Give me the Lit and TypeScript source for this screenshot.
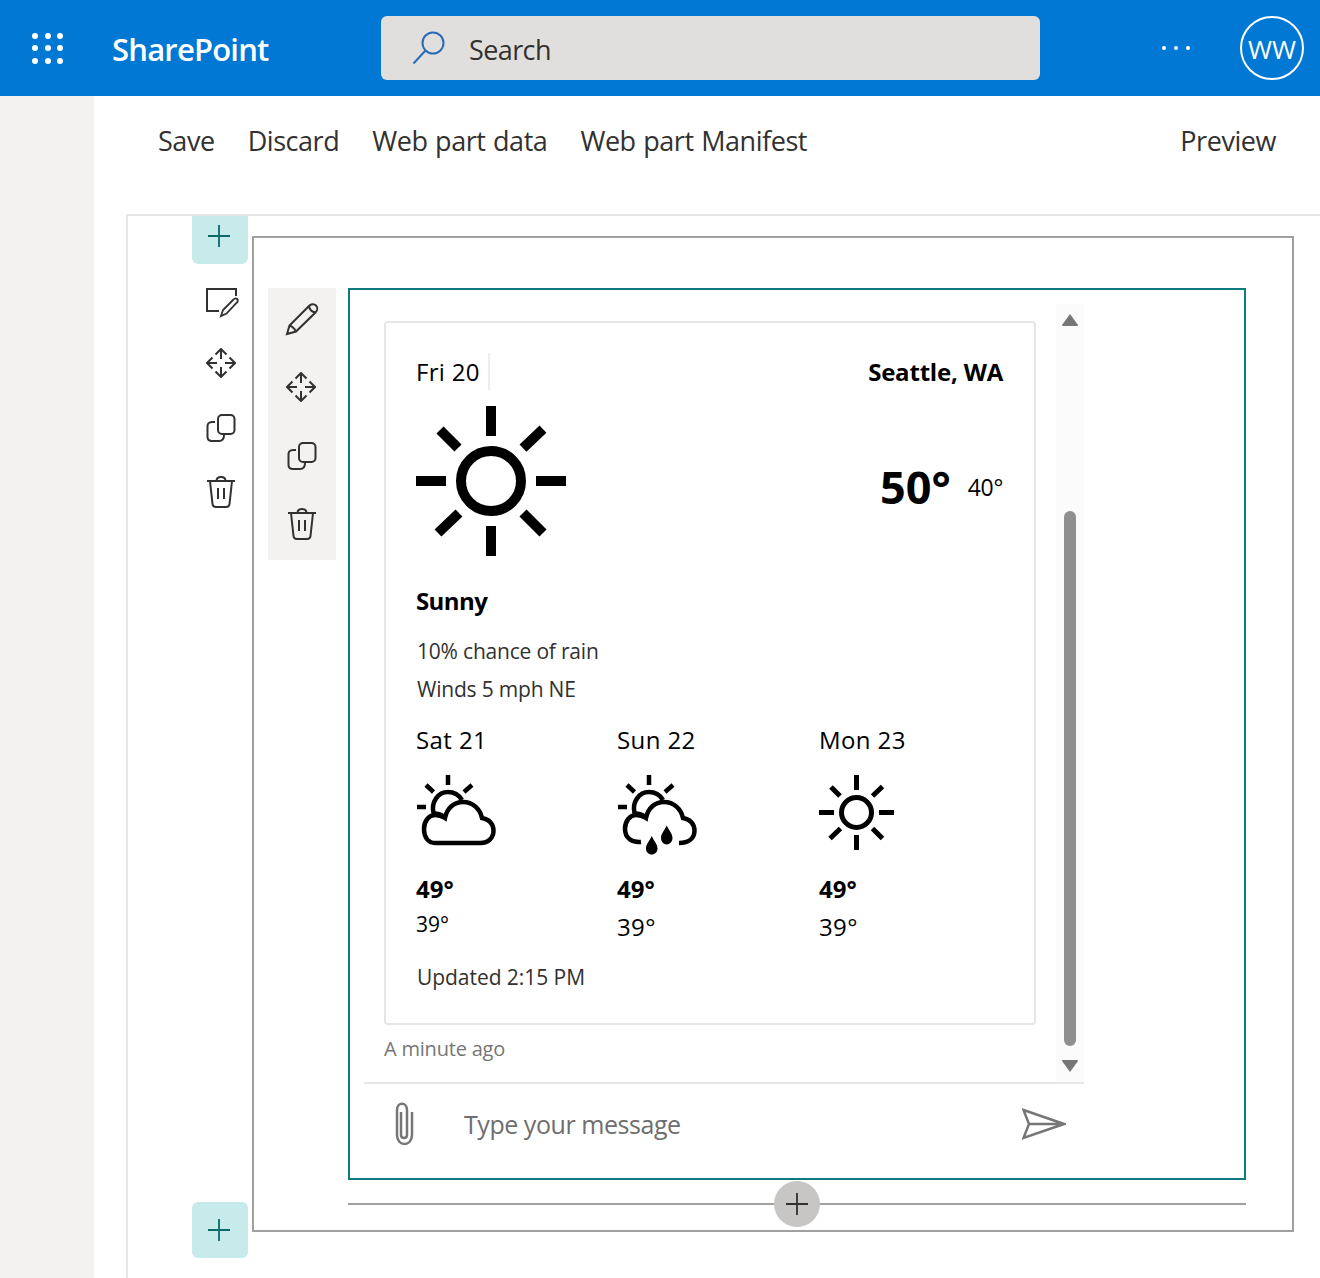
import { LitElement, html, svg, css } from "lit";
import { customElement } from "lit/decorators.js";

const sunIcon = (size: number) => html`
  <svg width=${size} height=${size} viewBox="0 0 150 150" fill="none" stroke="#000" stroke-width="10">
    <circle cx="75" cy="75" r="30" />
    <path d="M75 0V30M75 120V150M0 75H30M120 75H150M24 24L42 42M127 23L107 42M22 127L43 107M127 127L107 107" />
  </svg>
`;

const sunBehind = svg`
  <path d="M32 0V10M1 32H10M10 10L17.500 17M56 10L48 17" />
  <path d="M17.500 38C15 27 22 17 32 17C38 17 43 20 46 25" />
  <path d="M18 38.500C22 38.500 25 39.500 28 41.500" />
`;

const cloudSunIcon = html`
  <svg width="81" height="81" viewBox="0 0 81 81" fill="none" stroke="#000" stroke-width="4.500">
    ${sunBehind}
    <path d="M19 68C12 68 8 62 8 54C8 46 13 40 19 40C23 40 26 41 29 43C31 33 38 27 47 27C57 27 64 34 66 43C73 44 77.500 49 77.500 55.500C77.500 63 72 68 65 68Z" />
  </svg>
`;

const rainIcon = html`
  <svg width="81" height="81" viewBox="0 0 81 81" fill="none" stroke="#000" stroke-width="4.500">
    ${sunBehind}
    <path d="M24 67C14 68 8 62 8 54C8 46 13 40 19 40C23 40 26 41 29 43C31 33 38 27 47 27C57 27 64 34 66 43C73 44 77.500 49 77.500 55.500C77.500 63 72 68 62 68" />
    <path fill="#000" stroke="none" d="M34.700 61C37 66 40.500 69 40.500 73.500C40.500 77 38 79.500 34.700 79.500C31.500 79.500 29 77 29 73.500C29 69 32.500 66 34.700 61Z" />
    <path fill="#000" stroke="none" d="M49.700 50.500C52 55.500 55.500 58.500 55.500 63C55.500 66.500 53 69.500 49.700 69.500C46.500 69.500 44 66.500 44 63C44 58.500 47.500 55.500 49.700 50.500Z" />
  </svg>
`;

const moveIcon = html`
  <svg class="move" width="30" height="30" viewBox="0 0 30 30" fill="none" stroke="#323130" stroke-width="2">
    <path d="M15 1V11M15 19V29M1 15H11M19 15H29M9.500 6.500L15 1L20.500 6.500M9.500 23.500L15 29L20.500 23.500M6.500 9.500L1 15L6.500 20.500M23.500 9.500L29 15L23.500 20.500" />
  </svg>
`;

const copyIcon = html`
  <svg width="30" height="28" viewBox="0 0 30 28" fill="none" stroke="#323130" stroke-width="2">
    <rect x="12" y="1" width="16.500" height="19" rx="4" />
    <path d="M9 8H6C3 8 1.500 10 1.500 12V23C1.500 25.500 3 27 6 27H13C16 27 18 25 18 21" />
  </svg>
`;

const trashIcon = html`
  <svg width="30" height="32" viewBox="0 0 30 32" fill="none" stroke="#323130" stroke-width="2">
    <path d="M1 5H29M4 5L6.500 28C6.700 30 8 31 10 31H20C22 31 23.300 30 23.500 28L26 5M10.500 5C10.500 2.500 12.500 1 15 1C17.500 1 19.500 2.500 19.500 5M12 12V23M18 12V23" />
  </svg>
`;

const pencilIcon = html`
  <svg width="34" height="34" viewBox="0 0 34 34" fill="none" stroke="#323130" stroke-width="2">
    <path d="M2 32L4.500 23.500L24 4C26 2 29 1.500 31 3.500C33 5.500 32.500 8.500 30.500 10.500L11 29.500ZM4.500 23.500C7.500 24.500 9.500 26.500 11 29.500M24 4C24.500 7.500 27 10 30.500 10.500" />
  </svg>
`;

const noteIcon = html`
  <svg class="note" width="33" height="30" viewBox="0 0 33 30" fill="none" stroke="#323130" stroke-width="2">
    <path d="M13 23H1V1H30V8" />
    <path d="M15 28L17 22L27 12C28.500 10.500 30 10 31 11C32 12 32 13.500 30.500 15L20.500 25.500Z" stroke-width="1.800" />
  </svg>
`;

const plusIcon = html`
  <svg width="24" height="24" viewBox="0 0 24 24" fill="none" stroke="currentColor" stroke-width="1.800">
    <path d="M12 1V23M1 12H23" />
  </svg>
`;

const forecast = [
  { day: "Sat 21", icon: cloudSunIcon, high: "49°", low: "39°", lowClass: "low small" },
  { day: "Sun 22", icon: rainIcon, high: "49°", low: "39°", lowClass: "low" },
  { day: "Mon 23", icon: sunIcon(75), high: "49°", low: "39°", lowClass: "low" },
];

@customElement("app-root")
export class AppRoot extends LitElement {
  static styles = css`
    :host {
      display: block;
      height: 1278px;
      overflow: hidden;
      font-family: "Open Sans", "Noto Sans", sans-serif;
      color: #323130;
      background: #fff;
    }
    .top-bar {
      height: 96px;
      background: #0078d4;
      display: flex;
      align-items: center;
      color: #fff;
    }
    .waffle {
      margin-left: 32px;
      width: 32px;
      display: grid;
      grid-template-columns: repeat(3, 6px);
      gap: 6.5px;
    }
    .waffle i {
      width: 6px;
      height: 6px;
      border-radius: 50%;
      background: #fff;
    }
    .brand {
      margin-left: 48px;
      width: 269px;
      padding-top: 2px;
      font-size: 31px;
      font-weight: 600;
      letter-spacing: -0.8px;
    }
    .search {
      width: 659px;
      height: 64px;
      border-radius: 6px;
      background: #e1dfdd;
      display: flex;
      align-items: center;
      gap: 23px;
      padding-left: 31px;
      box-sizing: border-box;
      color: #323130;
      font-size: 27px;
      letter-spacing: -0.6px;
    }
    .search span {
      padding-top: 2px;
    }
    .dots {
      margin-left: 122px;
      display: flex;
      gap: 8px;
    }
    .dots i {
      width: 4px;
      height: 4px;
      border-radius: 50%;
      background: #fff;
    }
    .avatar {
      margin-left: 50px;
      width: 64px;
      height: 64px;
      box-sizing: border-box;
      border: 2px solid #fff;
      border-radius: 50%;
      padding-top: 2px;
      display: flex;
      align-items: center;
      justify-content: center;
      font-size: 26px;
    }
    .body {
      display: flex;
      height: 1182px;
    }
    .nav {
      width: 94px;
      background: #f3f2f1;
    }
    .page {
      flex: 1;
      min-width: 0;
    }
    .commands {
      height: 118px;
      box-sizing: border-box;
      padding: 28px 44px 0 64px;
      display: flex;
      gap: 33px;
      font-size: 27px;
      line-height: 34px;
      letter-spacing: -0.45px;
      word-spacing: 1px;
    }
    .commands .preview {
      margin-left: auto;
    }
    .canvas {
      margin-left: 32px;
      height: 1064px;
      box-sizing: border-box;
      border-top: 2px solid #e6e6e6;
      border-left: 2px solid #e6e6e6;
      display: flex;
    }
    .rail {
      width: 124px;
      flex: none;
      height: 1042px;
      display: flex;
      flex-direction: column;
      align-items: flex-start;
    }
    .add {
      margin-left: 64px;
      width: 56px;
      height: 56px;
      box-sizing: border-box;
      padding-right: 2px;
      background: #c7ebeb;
      color: #0b6a6a;
      border-radius: 6px;
      display: flex;
      align-items: center;
      justify-content: center;
    }
    .add.first {
      height: 48px;
      padding-bottom: 8px;
      border-radius: 0 0 6px 6px;
    }
    .add.last {
      margin-top: auto;
    }
    .rail-tools {
      margin: 24px 0 0 78px;
      display: flex;
      flex-direction: column;
      gap: 34px;
    }
    .note {
      margin-bottom: -2px;
    }
    .move {
      margin: -2px 0 2px;
    }
    .section {
      margin-top: 20px;
      width: 1042px;
      height: 996px;
      box-sizing: border-box;
      border: 2px solid #a0a0a0;
      padding: 50px 0 0 14px;
      display: flex;
      align-items: flex-start;
      gap: 12px;
      position: relative;
    }
    .part-tools {
      width: 68px;
      height: 272px;
      box-sizing: border-box;
      padding-top: 14px;
      background: #f3f2f1;
      display: flex;
      flex-direction: column;
      align-items: center;
      gap: 38px;
    }
    .part-tools .move {
      margin-left: -2px;
    }
    .webpart {
      width: 898px;
      height: 892px;
      box-sizing: border-box;
      border: 2px solid #0f7b7f;
      padding-left: 14px;
    }
    .chat {
      width: 720px;
      height: 888px;
      display: flex;
      flex-direction: column;
    }
    .thread {
      margin-top: 14px;
      height: 778px;
      display: flex;
      border-bottom: 2px solid #e6e6e6;
    }
    .messages {
      width: 692px;
      box-sizing: border-box;
      padding: 17px 20px 0;
    }
    .card {
      height: 704px;
      box-sizing: border-box;
      border: 2px solid #e6e6e6;
      border-radius: 4px;
      padding: 30px 31px 0 30px;
      color: #000;
    }
    .card-head {
      display: flex;
      justify-content: space-between;
      height: 37px;
      font-size: 24px;
      line-height: 37px;
    }
    .today {
      padding-right: 8px;
      border-right: 2px solid #eeeeee;
      letter-spacing: 0.3px;
    }
    .place {
      font-weight: 700;
      letter-spacing: -0.2px;
    }
    .hero {
      margin-top: 16px;
      display: flex;
      justify-content: space-between;
      align-items: center;
    }
    .temps {
      display: flex;
      align-items: center;
      gap: 17px;
      margin-top: 12px;
    }
    .high-big {
      font-size: 45px;
      font-weight: 700;
      line-height: 60px;
    }
    .low-big {
      font-size: 23px;
      line-height: 60px;
      letter-spacing: -0.3px;
    }
    .cond {
      margin-top: 28px;
      font-size: 24px;
      line-height: 34px;
      font-weight: 700;
      letter-spacing: -0.6px;
    }
    .details {
      margin-top: 14px;
      padding-left: 1px;
      font-size: 21px;
      line-height: 38px;
      letter-spacing: -0.2px;
      color: #323130;
    }
    .days {
      margin-top: 15px;
      display: grid;
      grid-template-columns: 201px 202px 1fr;
      font-size: 24px;
      letter-spacing: 0.4px;
    }
    .day-name {
      line-height: 34px;
    }
    .day-icon {
      margin-top: 18px;
      height: 81px;
    }
    .high {
      margin-top: 16px;
      line-height: 34px;
      font-weight: 700;
      letter-spacing: 0;
    }
    .low {
      margin-top: 2px;
      line-height: 38px;
    }
    .low.small {
      margin-top: 0;
      font-size: 21px;
      line-height: 36px;
      letter-spacing: 0;
    }
    .updated {
      margin-top: 14px;
      padding-left: 1px;
      font-size: 21px;
      line-height: 34px;
      letter-spacing: -0.05px;
      color: #323130;
    }
    .stamp {
      margin-top: 10px;
      font-size: 20px;
      line-height: 28px;
      color: #767676;
      letter-spacing: -0.2px;
    }
    .scrollbar {
      width: 28px;
      background: #fbfbfb;
      display: flex;
      flex-direction: column;
      align-items: center;
    }
    .thumb {
      margin-top: 185px;
      width: 12px;
      height: 535px;
      border-radius: 6px;
      background: #8f8f8f;
    }
    .arrow-up {
      margin-top: 10px;
    }
    .arrow-down {
      margin-top: 14px;
    }
    .composer {
      flex: 1;
      display: flex;
      align-items: center;
      padding: 0 18px 14px 30px;
      color: #6e6e6e;
      font-size: 25px;
      letter-spacing: -0.45px;
    }
    .composer span {
      margin-left: 50px;
      flex: 1;
    }
    .divider {
      position: absolute;
      left: 94px;
      top: 965px;
      width: 898px;
      height: 2px;
      background: #a0a0a0;
    }
    .insert {
      position: absolute;
      left: 426px;
      top: -22px;
      width: 46px;
      height: 46px;
      border-radius: 50%;
      background: #c8c6c4;
      display: flex;
      align-items: center;
      justify-content: center;
      color: #323130;
    }
  `;

  render() {
    return html`
      <div class="top-bar">
        <div class="waffle">${Array.from({ length: 9 }, () => html`<i></i>`)}</div>
        <div class="brand">SharePoint</div>
        <div class="search">
          <svg width="34" height="34" viewBox="0 0 34 34" fill="none" stroke="#2b6cb5" stroke-width="2">
            <circle cx="21" cy="12" r="10.500" />
            <path d="M13.500 19.500L1.500 32.500" />
          </svg>
          <span>Search</span>
        </div>
        <div class="dots"><i></i><i></i><i></i></div>
        <div class="avatar">WW</div>
      </div>
      <div class="body">
        <div class="nav"></div>
        <div class="page">
          <div class="commands">
            <span>Save</span>
            <span>Discard</span>
            <span>Web part data</span>
            <span>Web part Manifest</span>
            <span class="preview">Preview</span>
          </div>
          <div class="canvas">
            <div class="rail">
              <div class="add first">${plusIcon}</div>
              <div class="rail-tools">${noteIcon}${moveIcon}${copyIcon}${trashIcon}</div>
              <div class="add last">${plusIcon}</div>
            </div>
            <div class="section">
              <div class="part-tools">${pencilIcon}${moveIcon}${copyIcon}${trashIcon}</div>
              <div class="webpart">
                <div class="chat">
                  <div class="thread">
                    <div class="messages">
                      <div class="card">
                        <div class="card-head">
                          <span class="today">Fri 20</span>
                          <span class="place">Seattle, WA</span>
                        </div>
                        <div class="hero">
                          ${sunIcon(150)}
                          <div class="temps">
                            <span class="high-big">50°</span>
                            <span class="low-big">40°</span>
                          </div>
                        </div>
                        <div class="cond">Sunny</div>
                        <div class="details">
                          <div>10% chance of rain</div>
                          <div>Winds 5 mph NE</div>
                        </div>
                        <div class="days">
                          ${forecast.map(
                            (d) => html`
                              <div>
                                <div class="day-name">${d.day}</div>
                                <div class="day-icon">${d.icon}</div>
                                <div class="high">${d.high}</div>
                                <div class=${d.lowClass}>${d.low}</div>
                              </div>
                            `
                          )}
                        </div>
                        <div class="updated">Updated 2:15 PM</div>
                      </div>
                      <div class="stamp">A minute ago</div>
                    </div>
                    <div class="scrollbar">
                      <svg class="arrow-up" width="16" height="12" viewBox="0 0 16 12" fill="#767676">
                        <path d="M8 0L16 11C16 12 15 12 15 12H1C0 12 0 11 0 11Z" />
                      </svg>
                      <div class="thumb"></div>
                      <svg class="arrow-down" width="16" height="12" viewBox="0 0 16 12" fill="#767676">
                        <path d="M8 12L16 1C16 0 15 0 15 0H1C0 0 0 1 0 1Z" />
                      </svg>
                    </div>
                  </div>
                  <div class="composer">
                    <svg width="20" height="44" viewBox="0 0 20 44" fill="none" stroke="#767676" stroke-width="2.500">
                      <path d="M7 10V33C7 37 13 37 13 33V8C13 -0.500 3 -0.500 3 8V33C3 45 18 45 18 33V10" />
                    </svg>
                    <span>Type your message</span>
                    <svg width="44" height="32" viewBox="0 0 44 32" fill="none" stroke="#767676" stroke-width="2.500">
                      <path d="M1.500 2L42 16L1.500 30L7 16ZM7 16H42" />
                    </svg>
                  </div>
                </div>
              </div>
              <div class="divider">
                <div class="insert">${plusIcon}</div>
              </div>
            </div>
          </div>
        </div>
      </div>
    `;
  }
}

declare global {
  interface HTMLElementTagNameMap {
    "app-root": AppRoot;
  }
}
